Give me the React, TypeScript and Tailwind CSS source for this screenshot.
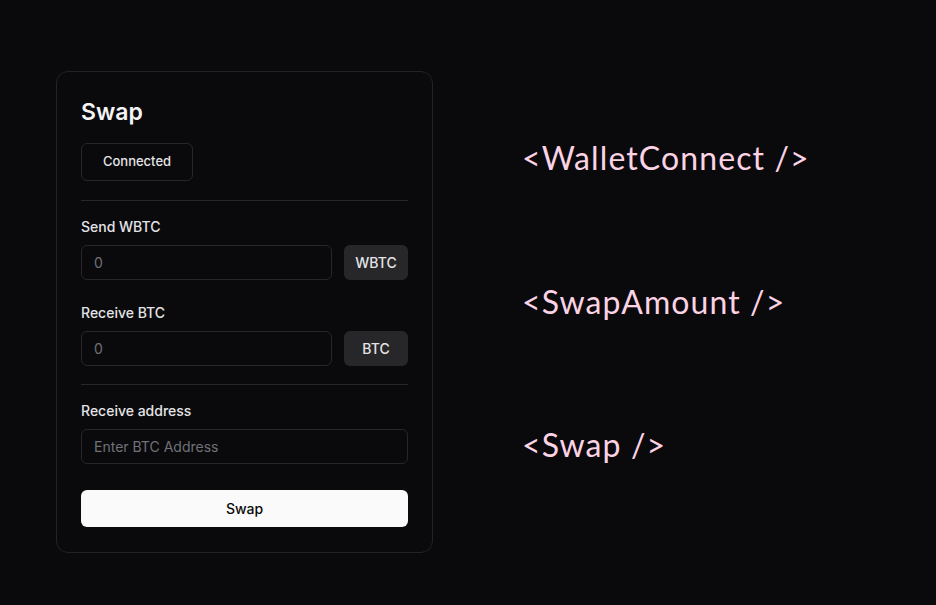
import React from 'react';

function Field({ label, placeholder, unit }: { label: string; placeholder: string; unit?: string }) {
  return (
    <div>
      <label className="block text-[14px] leading-5 font-medium text-[#e4e4e7]">{label}</label>
      <div className="mt-2 flex gap-3">
        <input
          placeholder={placeholder}
          className="h-[35px] flex-1 min-w-0 rounded-md border border-[#27272a] bg-transparent px-3 text-[14px] text-white placeholder:text-[#71717a] outline-none"
        />
        {unit && (
          <button className="h-[35px] w-[64px] rounded-md bg-[#27272a] text-[14px] font-medium text-[#e4e4e7]">
            {unit}
          </button>
        )}
      </div>
    </div>
  );
}

export default function App() {
  return (
    <div
      className="min-h-[605px] w-full bg-[#0a0a0c] flex pl-[56px] pt-[71px]"
      style={{ fontFamily: 'Inter, "Noto Sans", sans-serif' }}
    >
      <div className="w-[377px] h-[482px] rounded-xl border border-[#232326] bg-[#0a0a0c] px-6 pt-[26px]">
        <h1 className="text-[23px] leading-7 font-semibold text-[#f4f4f5]">Swap</h1>
        <button className="mt-[17px] h-[38px] w-[112px] rounded-md border border-[#27272a] text-[13px] font-medium text-[#e4e4e7]">
          Connected
        </button>
        <div className="mt-[19px] h-px bg-[#27272a]" />
        <div className="mt-4">
          <Field label="Send WBTC" placeholder="0" unit="WBTC" />
        </div>
        <div className="mt-[23px]">
          <Field label="Receive BTC" placeholder="0" unit="BTC" />
        </div>
        <div className="mt-[18px] h-px bg-[#27272a]" />
        <div className="mt-4">
          <Field label="Receive address" placeholder="Enter BTC Address" />
        </div>
        <button className="mt-[26px] h-[37px] w-full rounded-md bg-[#fafafa] text-[14px] font-medium text-[#0a0a0a]">
          Swap
        </button>
      </div>
      <div
        className="ml-[89px] pt-[67px] flex flex-col text-[32px] leading-10 tracking-[1.1px] text-[#fbd3e4]"
        style={{ fontFamily: 'Lato, "Noto Sans", sans-serif' }}
      >
        <span>&lt;WalletConnect /&gt;</span>
        <span className="mt-[104px]">&lt;SwapAmount /&gt;</span>
        <span className="mt-[103px]">&lt;Swap /&gt;</span>
      </div>
    </div>
  );
}
